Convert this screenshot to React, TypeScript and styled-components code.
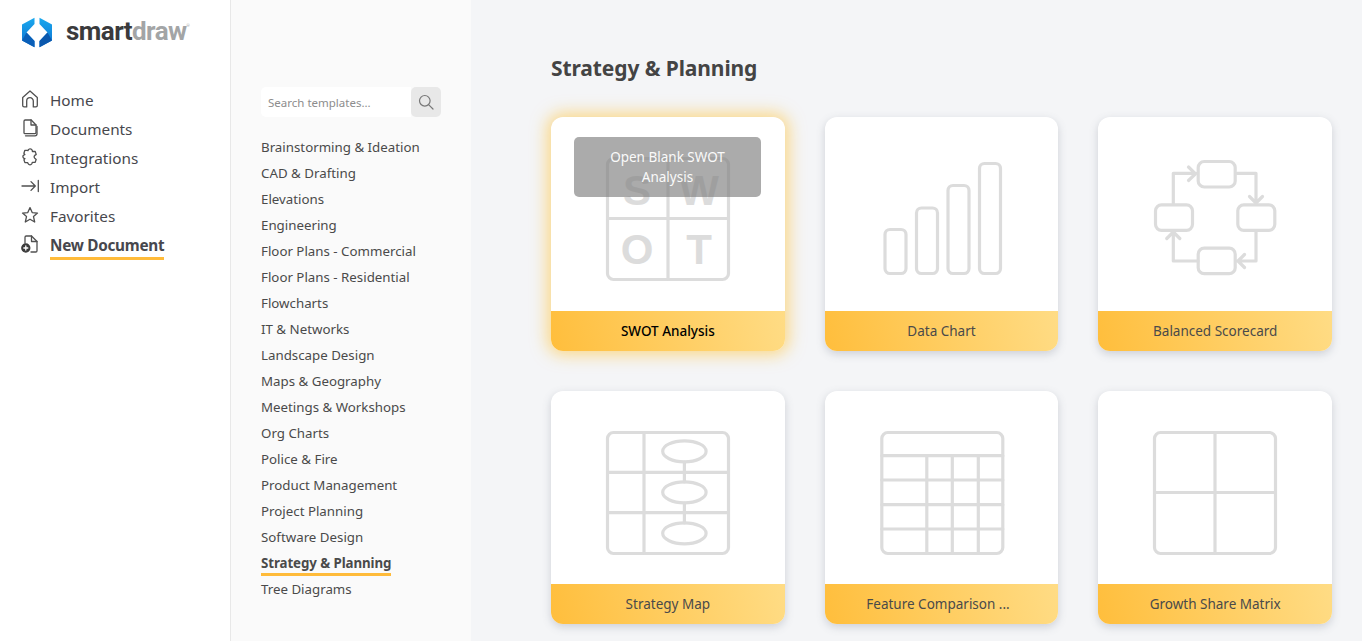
import React from "react";
import styled, { createGlobalStyle } from "styled-components";

const Global = createGlobalStyle`
  html, body { margin: 0; padding: 0; height: 100%; overflow: hidden; }
  body { font-family: "Noto Sans", "Liberation Sans", sans-serif; color: #444; }
  #root { height: 100%; }
  * { box-sizing: border-box; }
`;

const Page = styled.div`
  display: flex;
  height: 100vh;
  overflow: hidden;
  background: #f4f5f7;
`;

const Sidebar = styled.aside`
  width: 231px;
  flex: none;
  background: #fff;
  border-right: 1px solid #e8e8e8;
  padding: 17px 0 0 22px;
`;

const LogoRow = styled.div`
  display: flex;
  align-items: center;
  gap: 14px;
  height: 31px;
  margin-bottom: 38px;
`;

const LogoText = styled.div`
  font-family: "Roboto", sans-serif;
  font-size: 26px;
  font-weight: 700;
  letter-spacing: -0.55px;
  line-height: 31px;
  color: #3a3a3c;
  position: relative;
  top: -1px;
`;

const LogoLight = styled.span`
  color: #a3a5a6;
`;

const LogoMarkSmall = styled.sup`
  font-size: 4px;
  font-weight: 400;
  color: #a3a5a6;
  position: absolute;
  top: 8px;
  letter-spacing: 0;
  line-height: 4px;
`;

const Nav = styled.nav`
  display: flex;
  flex-direction: column;
  margin-top: -2px;
`;

const NavRow = styled.div`
  display: flex;
  align-items: center;
  gap: 12px;
  height: 29px;
`;

const NavIcon = styled.svg`
  width: 16px;
  height: 18px;
  flex: none;
  overflow: visible;
  fill: none;
  stroke: #505050;
  stroke-width: 1.3;
  stroke-linecap: round;
  stroke-linejoin: round;
`;

const NavLabel = styled.span<{ $active?: boolean }>`
  font-size: 15.3px;
  line-height: 20px;
  color: #47474d;
  font-weight: ${(p) => (p.$active ? 700 : 400)};
  letter-spacing: ${(p) => (p.$active ? "-0.27px" : "0")};
  position: relative;
  top: 1px;
  ${(p) =>
    p.$active &&
    `&::after { content: ""; position: absolute; left: 0; right: 0; top: 22px; height: 3px; background: #ffbb3a; }`}
`;

const Middle = styled.section`
  width: 240px;
  flex: none;
  background: #fafafa;
  padding: 87px 30px 0 30px;
`;

const SearchBox = styled.div`
  display: flex;
  height: 30px;
  width: 180px;
  margin-bottom: 18px;
`;

const SearchField = styled.div`
  flex: 1;
  background: #fff;
  border-radius: 5px 0 0 5px;
  font-size: 11.5px;
  line-height: 31px;
  padding-left: 7px;
  color: #8d8d8d;
`;

const SearchButton = styled.div`
  width: 30px;
  background: #e8e8e8;
  border-radius: 5px;
  display: flex;
  align-items: center;
  justify-content: center;
`;

const TemplateList = styled.div`
  display: flex;
  flex-direction: column;
  align-items: flex-start;
`;

const TemplateItem = styled.div<{ $active?: boolean }>`
  height: 26px;
  font-size: 13.3px;
  line-height: 25px;
  color: #4a4a4a;
  white-space: nowrap;
  font-weight: ${(p) => (p.$active ? 700 : 400)};
  letter-spacing: ${(p) => (p.$active ? "-0.08px" : "0")};
  position: relative;
  ${(p) =>
    p.$active &&
    `&::after { content: ""; position: absolute; left: 0; right: 0; top: 22px; height: 3px; background: #ffbb3a; }`}
`;

const Main = styled.main`
  flex: 1;
  padding: 53px 30px 0 80px;
`;

const Heading = styled.h1`
  margin: 0 0 34px;
  font-size: 21px;
  line-height: 30px;
  font-weight: 700;
  letter-spacing: -0.1px;
  color: #444;
`;

const Grid = styled.div`
  display: grid;
  grid-template-columns: repeat(3, 1fr);
  gap: 40px;
`;

const Card = styled.div<{ $hover?: boolean }>`
  aspect-ratio: 1;
  border-radius: 12px;
  background: #fff;
  display: flex;
  flex-direction: column;
  position: relative;
  box-shadow: ${(p) =>
    p.$hover ? "0 0 16px 4px rgba(255, 198, 70, 0.62)" : "0 3px 8px rgba(90, 100, 120, 0.25)"};
`;

const CardBody = styled.div`
  flex: 1;
  display: flex;
  justify-content: center;
  padding-top: 40px;
`;

const Art = styled.svg`
  width: 124px;
  height: 124px;
  overflow: visible;
  fill: none;
  stroke: #dcdcdc;
  stroke-width: 3.2;
  stroke-linecap: round;
  stroke-linejoin: round;
`;

const ArtLetter = styled.text`
  font-family: "Liberation Sans", sans-serif;
  font-size: 42px;
  font-weight: 700;
  fill: #dcdcdc;
  stroke: none;
  text-anchor: middle;
`;

const CardFooter = styled.div<{ $hover?: boolean }>`
  height: 40px;
  flex: none;
  border-radius: 0 0 12px 12px;
  background: linear-gradient(75deg, #ffbe3c 0%, #ffdc85 100%);
  display: flex;
  align-items: center;
  justify-content: center;
  font-size: 13.5px;
  color: ${(p) => (p.$hover ? "#000" : "#4a4a4a")};
  font-weight: ${(p) => (p.$hover ? 500 : 400)};
  white-space: pre;
`;

const Overlay = styled.div`
  position: absolute;
  left: 23px;
  top: 20px;
  width: 187px;
  height: 60px;
  border-radius: 5px;
  background: rgba(128, 128, 128, 0.66);
  color: #fafafa;
  font-size: 13.5px;
  line-height: 20px;
  text-align: center;
  padding: 10px 20px;
`;

const Home = () => (
  <NavIcon viewBox="0 0 16 18">
    <path d="M.7 7.500 8 1l7.300 6.500V15.500a1.400 1.400 0 0 1-1.400 1.400h-2.600V11a3.300 3.300 0 0 0-6.600 0v5.900H2.100a1.400 1.400 0 0 1-1.400-1.400z" />
  </NavIcon>
);
const Doc = () => (
  <NavIcon viewBox="0 0 16 18">
    <path d="M2 14V2.200A1.200 1.200 0 0 1 3.200 1h6L14 6v7.600a1 1 0 0 1-1 1H3a1 1 0 0 1-1-.6z" />
    <path d="M9 1v5h5M3.500 16.800h9.500a2 2 0 0 0 2-2V7.500" />
  </NavIcon>
);
const Puzzle = () => (
  <NavIcon viewBox="0 0 16 18">
    <path d="M6 2.600a2.200 2.200 0 0 1 4.200-.4l.2 1.300h2.800l1 2.900-1.400 1a1.900 1.900 0 0 0 0 2.900l1.400 1.100-1 2.900h-2.800l-.6 1.400a2 2 0 0 1-3.600 0l-.6-1.100H2.900l-1-2.800 1-1.200a2 2 0 0 1-2-2 2 2 0 0 1 2-2l-1-1.300 1-3h2.500z" />
  </NavIcon>
);
const ImportIcon = () => (
  <NavIcon viewBox="0 0 16 18">
    <path d="M0 9h13M9 4.600 13.300 9 9 13.400M16.300 3.500v11" />
  </NavIcon>
);
const Star = () => (
  <NavIcon viewBox="0 0 16 18">
    <path d="M8 1.600l2.200 5 5.300.5-4 3.500 1.200 5.400L8 13.200l-4.700 2.800 1.200-5.400-4-3.500 5.300-.5z" />
  </NavIcon>
);
const NewDoc = () => (
  <NavIcon viewBox="0 0 16 18">
    <path d="M3 8V2.200A1.200 1.200 0 0 1 4.200 1h5.300L15 6.500v9.300a1.200 1.200 0 0 1-1.200 1.200H9" />
    <path d="M9.500 1v5.500H15" />
    <circle cx="3.800" cy="13" r="4" fill="#3c3c3c" stroke="#3c3c3c" />
    <path d="M3.800 11v4M1.800 13h4" stroke="#fff" />
  </NavIcon>
);

const Swot = () => (
  <Art viewBox="0 0 124 124">
    <rect x="1.500" y="1.500" width="121" height="121" rx="6" />
    <path d="M62 1.500v121M1.500 61.500h121" />
    <ArtLetter x="31" y="48">S</ArtLetter>
    <ArtLetter x="93" y="48">W</ArtLetter>
    <ArtLetter x="31" y="107">O</ArtLetter>
    <ArtLetter x="93" y="107">T</ArtLetter>
  </Art>
);

const BarsArt = () => (
  <Art viewBox="0 0 124 124">
    <rect x="5" y="72.500" width="21" height="44" rx="5" />
    <rect x="36.500" y="51" width="21" height="65.500" rx="5" />
    <rect x="68" y="28.500" width="21" height="88" rx="5" />
    <rect x="99.500" y="6.500" width="21" height="110" rx="5" />
  </Art>
);

const CycleArt = () => (
  <Art viewBox="0 0 124 124">
    <rect x="45.200" y="4.500" width="37" height="25.500" rx="6" />
    <rect x="2.500" y="47.800" width="37" height="25.500" rx="6" />
    <rect x="84.800" y="47.800" width="37" height="25.500" rx="6" />
    <rect x="45.200" y="91.200" width="37" height="25.500" rx="6" />
    <path d="M20.300 47V16.300H43M35.500 10 42.500 16.800 35.500 23.500" />
    <path d="M84 16.300H103V46M96.500 39.500 103 46 109.500 39.500" />
    <path d="M103 74V104H84M91.500 97.500 85 104 91.500 110.500" />
    <path d="M45 104H20.300V75M13.800 81.500 20.300 75 26.800 81.500" />
  </Art>
);

const MapArt = () => (
  <Art viewBox="0 0 124 124">
    <rect x="1.500" y="1.500" width="121" height="121" rx="6" />
    <path d="M38 1.500v121M1.500 41.300h121M1.500 81.700h121M78.400 31v20M78.400 72v20" />
    <ellipse cx="78.400" cy="20.300" rx="21.700" ry="10.500" />
    <ellipse cx="78.400" cy="61.300" rx="21.700" ry="10.500" />
    <ellipse cx="78.400" cy="102.300" rx="21.700" ry="10.500" />
  </Art>
);

const TableArt = () => (
  <Art viewBox="-0.300 0 124 124">
    <rect x="1.500" y="1.500" width="121" height="121" rx="6" />
    <path d="M1.500 24.700h121M1.500 49h121M1.500 73.700h121M1.500 98h121M46.500 24.700v97.800M72 24.700v97.800M98 24.700v97.800" />
  </Art>
);

const MatrixArt = () => (
  <Art viewBox="0 0 124 124">
    <rect x="1.500" y="1.500" width="121" height="121" rx="6" />
    <path d="M62 1.500v121M1.500 61.500h121" />
  </Art>
);

const navItems: [string, React.FC][] = [
  ["Home", Home],
  ["Documents", Doc],
  ["Integrations", Puzzle],
  ["Import", ImportIcon],
  ["Favorites", Star],
];

const templates = [
  "Brainstorming & Ideation",
  "CAD & Drafting",
  "Elevations",
  "Engineering",
  "Floor Plans - Commercial",
  "Floor Plans - Residential",
  "Flowcharts",
  "IT & Networks",
  "Landscape Design",
  "Maps & Geography",
  "Meetings & Workshops",
  "Org Charts",
  "Police & Fire",
  "Product Management",
  "Project Planning",
  "Software Design",
  "Strategy & Planning",
  "Tree Diagrams",
];

const cards: [string, React.FC][] = [
  ["SWOT Analysis", Swot],
  ["Data Chart", BarsArt],
  ["Balanced Scorecard", CycleArt],
  ["Strategy Map", MapArt],
  ["Feature Comparison ...\u00a0\u00a0", TableArt],
  ["Growth Share Matrix", MatrixArt],
];

const LogoMark = () => (
  <svg width="30" height="31" viewBox="0 0 30 31" style={{ flex: "none" }}>
    <defs>
      <linearGradient id="lg" x1="0" y1="0" x2="0" y2="1">
        <stop offset="0" stopColor="#1aa9ee" />
        <stop offset="1" stopColor="#0d6fd0" />
      </linearGradient>
    </defs>
    <path d="M12.500.8 L12.500 7 L4.500 15.500 L12.500 24 L12.500 30.200 L0 23.500 V7.500Z" fill="url(#lg)" />
    <path d="M17.500.8 L17.500 7 L25.500 15.500 L17.500 24 L17.500 30.200 L30 23.500 V7.500Z" fill="url(#lg)" />
    <path d="M0 23.500 L4.500 15.500 L12.500 24 L12.500 30.200Z" fill="#0a5fb8" />
    <path d="M30 23.500 L25.500 15.500 L17.500 24 L17.500 30.200Z" fill="#0b58ad" />
  </svg>
);

export default function App() {
  return (
    <Page>
      <Global />
      <Sidebar>
        <LogoRow>
          <LogoMark />
          <LogoText>
            smart<LogoLight>draw</LogoLight>
            <LogoMarkSmall>®</LogoMarkSmall>
          </LogoText>
        </LogoRow>
        <Nav>
          {navItems.map(([label, Icon]) => (
            <NavRow key={label}>
              <Icon />
              <NavLabel>{label}</NavLabel>
            </NavRow>
          ))}
          <NavRow>
            <NewDoc />
            <NavLabel $active>New Document</NavLabel>
          </NavRow>
        </Nav>
      </Sidebar>
      <Middle>
        <SearchBox>
          <SearchField>Search templates...</SearchField>
          <SearchButton>
            <svg width="16" height="16" viewBox="0 0 16 16" fill="none" stroke="#777" strokeWidth="1.200" strokeLinecap="round">
              <circle cx="6.800" cy="6.800" r="5.300" />
              <path d="M10.800 10.800 15 15" />
            </svg>
          </SearchButton>
        </SearchBox>
        <TemplateList>
          {templates.map((t) => (
            <TemplateItem key={t} $active={t === "Strategy & Planning"}>
              {t}
            </TemplateItem>
          ))}
        </TemplateList>
      </Middle>
      <Main>
        <Heading>Strategy &amp; Planning</Heading>
        <Grid>
          {cards.map(([label, ArtIcon], i) => (
            <Card key={label} $hover={i === 0}>
              <CardBody>
                <ArtIcon />
              </CardBody>
              <CardFooter $hover={i === 0}>{label}</CardFooter>
              {i === 0 && <Overlay>Open Blank SWOT Analysis</Overlay>}
            </Card>
          ))}
        </Grid>
      </Main>
    </Page>
  );
}
